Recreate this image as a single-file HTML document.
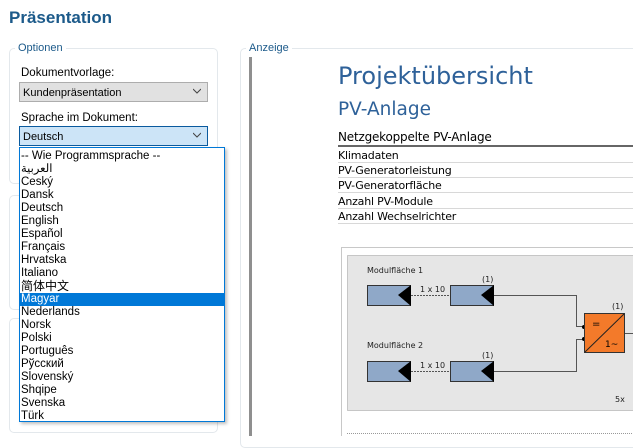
<!DOCTYPE html>
<html><head><meta charset="utf-8"><style>
*{margin:0;padding:0;box-sizing:border-box}
body{width:633px;height:436px;overflow:hidden;background:#fff;font-family:"Liberation Sans","Noto Sans CJK SC",sans-serif;font-size:11px;color:#000;position:relative}
.a{position:absolute;white-space:nowrap}
.fs{position:absolute;border:1px solid #e3e8ec;border-radius:5px}
.leg{position:absolute;background:#fff;color:#1c5a8a;font-size:11px;padding:0 3px}
.combo{position:absolute;height:20px;border:1px solid #adadad;background:#e1e1e1;padding:4px 0 0 3px;font-size:11px}
.chev{position:absolute;right:6px;top:4px;width:8px;height:8px}
.list{position:absolute;left:19px;top:147px;width:206px;height:275px;border:1px solid #0078d7;background:#fff;box-shadow:2px 2px 3px rgba(0,0,0,.25);padding-top:2px}
.list div{height:13px;line-height:13px;padding-left:1px;font-size:11.5px}
.sel{background:#0078d7;color:#fff}
.doc{font-family:"DejaVu Sans","Liberation Sans",sans-serif;color:#2e6199}
.row{position:absolute;left:338px;width:295px;border-bottom:1px solid #d8d8d8;font-size:11px;font-family:"DejaVu Sans",sans-serif;height:15px;line-height:16px;letter-spacing:-0.2px}
</style></head><body>
<div class="a" style="left:9px;top:8px;font-size:17px;font-weight:bold;color:#1c5a8a">Präsentation</div>

<div class="fs" style="left:9px;top:48px;width:209px;height:136px"></div>
<div class="leg" style="left:15px;top:42px">Optionen</div>
<div class="fs" style="left:9px;top:195px;width:209px;height:115px"></div>
<div class="fs" style="left:9px;top:318px;width:209px;height:115px"></div>
<div class="a" style="left:21px;top:67px;font-size:11.5px">Dokumentvorlage:</div>
<div class="combo" style="left:19px;top:82px;width:189px">Kundenpräsentation<svg class="chev" viewBox="0 0 8 8"><path d="M0 2 L4 6 L8 2" fill="none" stroke="#444"/></svg></div>
<div class="a" style="left:21px;top:112px;font-size:11.5px">Sprache im Dokument:</div>
<div class="combo" style="left:19px;top:126px;width:189px;background:#cce4f7;border-color:#0a5a9e">Deutsch<svg class="chev" viewBox="0 0 8 8"><path d="M0 2 L4 6 L8 2" fill="none" stroke="#444"/></svg></div>
<div class="list">
<div>-- Wie Programmsprache --</div><div>العربية</div><div>Cesky&#769;</div><div>Dansk</div><div>Deutsch</div><div>English</div><div>Español</div><div>Français</div><div>Hrvatska</div><div>Italiano</div><div style="font-size:12px">简体中文</div><div class="sel">Magyar</div><div>Nederlands</div><div>Norsk</div><div>Polski</div><div>Português</div><div>Рўсский</div><div>Slovenský</div><div>Shqipe</div><div>Svenska</div><div>Türk</div>
</div>

<div class="fs" style="left:240px;top:48px;width:400px;height:400px"></div>
<div class="leg" style="left:246px;top:42px">Anzeige</div>
<div class="a" style="left:249px;top:57px;width:3px;height:379px;background:#8f8f8f"></div>

<div class="a doc" style="left:338px;top:62px;font-size:24px">Projektübersicht</div>
<div class="a doc" style="left:338px;top:99px;font-size:18.5px">PV-Anlage</div>
<div class="row" style="top:130px;border-bottom:2px solid #666;height:17px;font-size:12px;line-height:15px">Netzgekoppelte PV-Anlage</div>
<div class="row" style="top:148px">Klimadaten</div>
<div class="row" style="top:163px">PV-Generatorleistung</div>
<div class="row" style="top:178px">PV-Generatorfläche</div>
<div class="row" style="top:194px">Anzahl PV-Module</div>
<div class="row" style="top:209px">Anzahl Wechselrichter</div>

<svg class="a" style="left:0;top:0" width="633" height="436" viewBox="0 0 633 436" font-family="DejaVu Sans, sans-serif">
<rect x="341.5" y="247.5" width="300" height="200" fill="#fff" stroke="#c8c8c8"/>
<rect x="347.5" y="255.5" width="290" height="155" fill="#e6e6e6" stroke="#999" stroke-dasharray="1,1"/>
<line x1="347" y1="433.5" x2="633" y2="433.5" stroke="#999" stroke-dasharray="1,1"/>
<text x="367" y="273" font-size="8" fill="#222">Modulfläche 1</text>
<text x="367" y="348" font-size="8" fill="#222">Modulfläche 2</text>
<g stroke="#333" fill="#8fa8c8">
<rect x="367.5" y="285.5" width="43" height="20"/><rect x="450.5" y="285.5" width="43" height="20"/>
<rect x="367.5" y="361.5" width="43" height="20"/><rect x="450.5" y="361.5" width="43" height="20"/>
</g>
<g fill="#000">
<path d="M398 295 L411 285 L411 306 Z"/><path d="M481 295 L494 285 L494 306 Z"/>
<path d="M398 371 L411 361 L411 382 Z"/><path d="M481 371 L494 361 L494 382 Z"/>
</g>
<g stroke="#555" stroke-dasharray="2,1"><line x1="411" y1="295.5" x2="450" y2="295.5"/><line x1="411" y1="371.5" x2="450" y2="371.5"/></g>
<g font-size="8" fill="#222"><text x="420" y="292">1 x 10</text><text x="420" y="368">1 x 10</text>
<text x="482" y="282">(1)</text><text x="482" y="358">(1)</text><text x="612" y="309">(1)</text><text x="615" y="402">5x</text></g>
<g stroke="#555" fill="none"><path d="M494 295.5 H576.5 V326.5 H584"/><path d="M494 371.5 H576.5 V339.5 H584"/><path d="M624 333.5 H633"/></g>
<circle cx="584" cy="327" r="2" fill="#000"/><circle cx="584" cy="339" r="2" fill="#000"/>
<rect x="584.5" y="313.5" width="40" height="39" fill="#f37a2a" stroke="#333"/>
<line x1="585" y1="352" x2="624" y2="314" stroke="#222"/>
<text x="592" y="327" font-size="10">=</text><text x="605" y="347" font-size="9">1~</text>
</svg>
</body></html>
